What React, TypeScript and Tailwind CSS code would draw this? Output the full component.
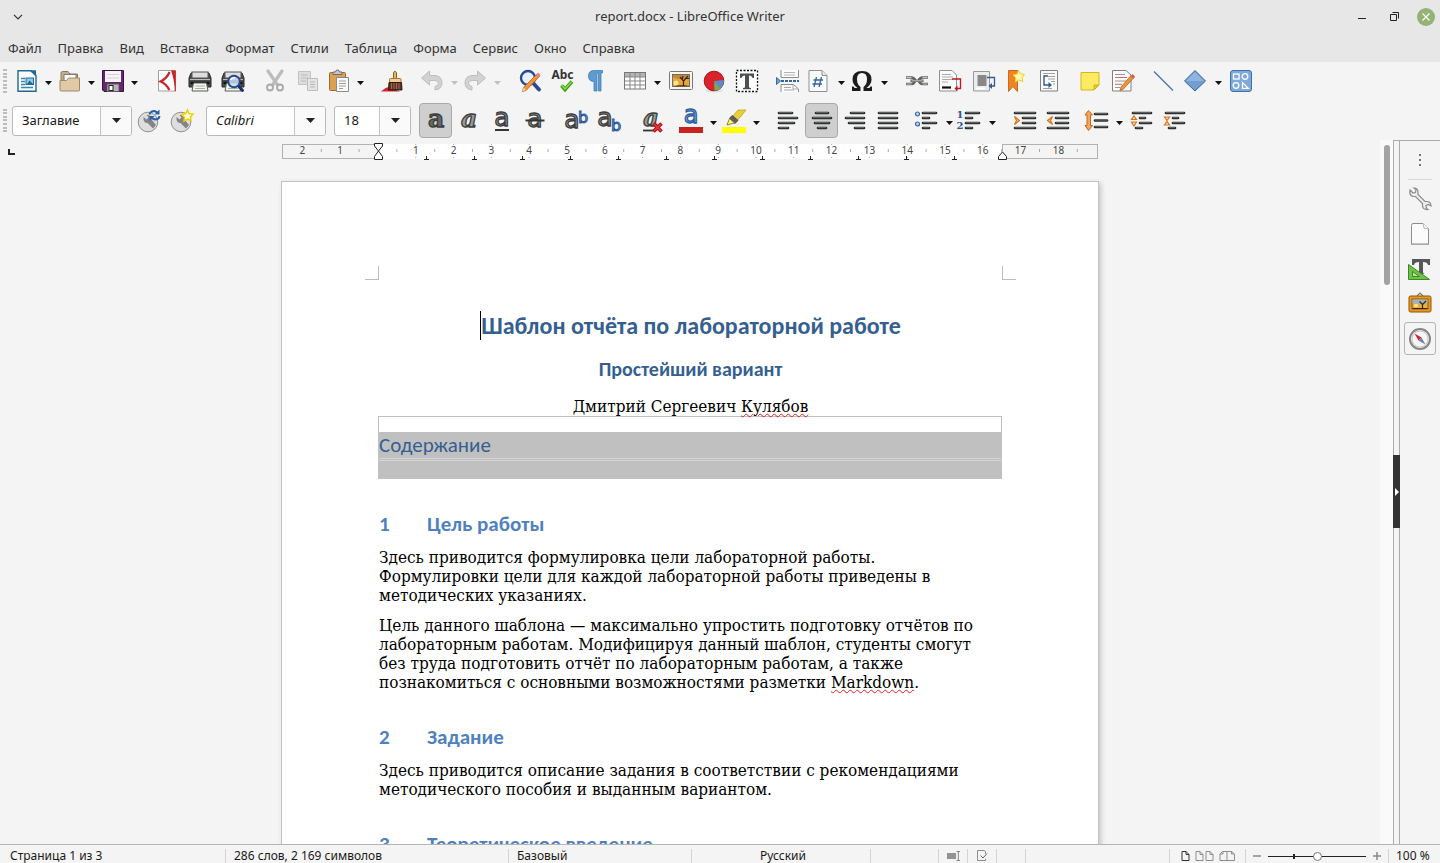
import React from "react";
import type { ReactNode } from "react";

/* ---------- icon helpers ---------- */

function Ic({ children, size = 24 }: { children: ReactNode; size?: number }) {
  return (
    <svg width={size} height={size} viewBox="0 0 24 24" className="block shrink-0 overflow-visible" fill="none" aria-hidden="true">
      {children}
    </svg>
  );
}

function Caret({ dim = false }: { dim?: boolean }) {
  return (
    <svg width="7" height="4" viewBox="0 0 7 4" className="block" aria-hidden="true">
      <path d="M0 0H7L3.5 4Z" fill={dim ? "#c0c0c0" : "#111"} />
    </svg>
  );
}

const NewDoc = () => (
  <Ic>
    <path d="M3 1.8H16L21 6.5V22.2H3Z" fill="#fbfdfe" stroke="#1d6a97" strokeWidth="1.4" />
    <path d="M14.5 1.2H21V7.6Z" fill="#1d6a97" />
    <path d="M6 9.5H10M6 12.5H10M6 15.5H10M6 18.5H18" stroke="#3584b4" strokeWidth="1.5" />
    <rect x="11" y="9" width="7.5" height="6.5" fill="#9bc7e2" stroke="#1d6a97" />
    <path d="M12 15L14.5 11.5L18 15Z" fill="#1d6a97" />
  </Ic>
);
const OpenDoc = () => (
  <Ic>
    <path d="M3 20V4Q3 2.5 4.5 2.5H10L12 5H19.5V20Z" fill="#c5ae88" stroke="#8d7a5b" />
    <path d="M6 5.5H18V13H6Z" fill="#fff" stroke="#777" />
    <path d="M2 21V11.5H8.5L10.5 9H21.5V21Q21.5 22 20.5 22H3Q2 22 2 21Z" fill="#dfc9a6" stroke="#9f8a68" />
  </Ic>
);
const SaveDoc = () => (
  <Ic>
    <path d="M1.5 1.5H22.5V22.5H3L1.5 21Z" fill="#64286e" stroke="#3c1245" />
    <rect x="4" y="2" width="16" height="11" fill="#f7f5f8" />
    <path d="M6 5.5H18M6 9H18" stroke="#d5ccd8" />
    <rect x="6" y="15" width="12" height="7.5" fill="#b5b5b5" stroke="#555" strokeWidth=".8" />
    <rect x="8" y="16.5" width="4" height="5" fill="#fff" stroke="#222" />
  </Ic>
);
const Pdf = () => (
  <Ic>
    <path d="M3.500 1.500H20.500V22H3.500Z" fill="#fff" stroke="#a0a0a0" />
    <path d="M16 1.500H20.800V22.300H19.800Q19.500 11 16 1.500Z" fill="#cf1f28" />
    <path d="M14.500 3Q12 9.500 5.500 12.500Q11.500 15 14.300 21" stroke="#cf1f28" strokeWidth="2.200" />
  </Ic>
);
const printerShape = (
  <>
    <path d="M3 4H21L23 9V18H1V9Z" fill="#4b4d4b" stroke="#292b29" />
    <rect x="4" y="3" width="16" height="6" fill="#dedede" stroke="#555" />
    <path d="M2 10.500H22" stroke="#bbb" />
    <path d="M2.500 14H21.500" stroke="#111" strokeWidth="2.500" />
    <path d="M5.500 14H18.500L20 22H4Z" fill="#f4f5f2" stroke="#596055" />
    <path d="M7.500 17H17M7 19.500H17" stroke="#a6b39d" />
  </>
);
const Print = () => <Ic>{printerShape}</Ic>;
const Preview = () => (
  <Ic>
    {printerShape}
    <path d="M17.500 17L21.500 21.500" stroke="#18306b" strokeWidth="3" strokeLinecap="round" />
    <circle cx="13" cy="12.500" r="5.800" fill="#c9dcf0" fillOpacity=".85" stroke="#23488f" strokeWidth="2" />
    <path d="M9.500 11Q11 8.500 14 9" stroke="#fff" strokeWidth="1.300" />
  </Ic>
);
const Cut = () => (
  <Ic>
    <path d="M5 2L14.500 16M19 2L9.500 16" stroke="#bcbcbc" strokeWidth="3.200" strokeLinecap="round" />
    <circle cx="7" cy="18.500" r="3" stroke="#a9a9a9" strokeWidth="1.800" />
    <circle cx="17" cy="18.500" r="3" stroke="#a9a9a9" strokeWidth="1.800" />
  </Ic>
);
const Copy = () => (
  <Ic>
    <path d="M2.500 2.500H14.500V15.500H2.500Z" fill="#ddd" stroke="#c3c3c3" />
    <path d="M5 6H12M5 9H12M5 12H10" stroke="#bbb" />
    <path d="M11.500 9.500H21.500V21.500H11.500Z" fill="#e4e4e4" stroke="#bdbdbd" />
    <path d="M14 13H19M14 15.500H19M14 18H19" stroke="#b6b6b6" />
  </Ic>
);
const Paste = () => (
  <Ic>
    <rect x="2.500" y="3.500" width="16" height="18" rx="1" fill="#dca054" stroke="#9b6c2d" />
    <path d="M6 5.500V3H8.500Q8.500 1 10.500 1T12.500 3H15V5.500Z" fill="#c6c6c6" stroke="#6d6d6d" />
    <path d="M9.500 8.500H21.500V22.500H9.500Z" fill="#fbfbfb" stroke="#8b8b8b" />
    <path d="M12 12H19M12 14.500H19M12 17H19M12 19.500H16" stroke="#9a9a9a" />
  </Ic>
);
const Brush = () => (
  <Ic>
    <path d="M0 22.500Q6 17 9 18.500L19 22.500Z" fill="#d9222a" />
    <path d="M12.500 10V3.500Q14 1 15.500 3.500V10Z" fill="#eab35b" stroke="#8f6425" />
    <rect x="8.500" y="9.500" width="11.500" height="4" rx="1" fill="#efcf8f" stroke="#a27a36" />
    <path d="M8 13.500H20.500L21 21H7.500Z" fill="#5c3326" stroke="#2f1812" />
    <path d="M10.500 14V20M13 14V20M15.500 14V20M18 14V20" stroke="#a5694f" />
  </Ic>
);
const undoPath = "M0.500 9L8.500 2V6.500H13Q21 6.500 21 14Q21 20 14 21V17.500Q17.500 17 17.500 14Q17.500 11.500 13.500 11.500H8.500V16Z";
const Undo = () => (
  <Ic><path d={undoPath} fill="#d2d2d2" stroke="#bdbdbd" /></Ic>
);
const Redo = () => (
  <Ic><path d={undoPath} fill="#d2d2d2" stroke="#bdbdbd" transform="translate(22 0) scale(-1 1)" /></Ic>
);
const Find = () => (
  <Ic>
    <circle cx="10" cy="9" r="7" fill="#e6effa" stroke="#294b94" strokeWidth="2.400" />
    <path d="M15.500 14.500L21 20.500" stroke="#294b94" strokeWidth="3.800" strokeLinecap="round" />
    <path d="M19 5L21.500 7.500L8 21.500L4.500 22.500L5.500 18.500Z" fill="#f0953a" stroke="#b5601a" strokeWidth=".8" />
    <path d="M18 6L20 3.500L22.500 6L20.700 8.500Z" fill="#d98484" />
    <path d="M4.500 22.500L5.500 18.500L8 21Z" fill="#f1d2a5" />
  </Ic>
);
const Spell = () => (
  <Ic>
    <text x="11.500" y="10" textAnchor="middle" fontSize="12" fontWeight="700" fontFamily="'Noto Sans', sans-serif" fill="#333">Abc</text>
    <path d="M10.500 16.500L14 20.500L21 12.500" stroke="#3f9b19" strokeWidth="3.600" />
    <path d="M10.800 16.500L14 20L20.700 12.800" stroke="#8ae234" strokeWidth="1.500" />
  </Ic>
);
const Pilcrow = () => (
  <Ic>
    <path d="M10 1.500H18.500V4H17V22H14.500V4H13V22H10V12.500Q4.500 12.500 4.500 7T10 1.500Z" fill="#5d9cd3" stroke="#4281b8" strokeWidth=".8" />
  </Ic>
);
const TableIcon = () => (
  <Ic>
    <rect x="0.500" y="3.500" width="21" height="16.500" fill="#fff" stroke="#777" />
    <rect x="1" y="4" width="20" height="4" fill="#b4b4b4" />
    <path d="M1 8H21M1 12H21M1 16H21M6 4V20M11 4V20M16 4V20" stroke="#878787" />
  </Ic>
);
const Tree = () => (
  <>
    <rect x="3.500" y="5.500" width="17" height="12" fill="#e6a43a" />
    <path d="M3.500 5.500H20.500V9Q12 12 3.500 8Z" fill="#c3873d" />
    <circle cx="7" cy="14" r="2.500" fill="#ffe58e" />
    <path d="M3.500 17.500Q12 15.500 20.500 17V17.500Z" fill="#3e2508" />
    <path d="M14.500 17V12L11 8M14.500 12L19 7M17 9.500H20M13 10.500L14 7" stroke="#3b240b" strokeWidth="1.200" />
  </>
);
const ImageIcon = () => (
  <Ic>
    <rect x="0.500" y="2.500" width="23" height="18" rx="1" fill="#f5f5f2" stroke="#787878" />
    <Tree />
    <rect x="3.500" y="5.500" width="17" height="12" stroke="#5d5d55" strokeWidth=".8" />
  </Ic>
);
const Chart = () => (
  <Ic>
    <ellipse cx="12" cy="21.500" rx="9" ry="2" fill="#e0e0e0" />
    <circle cx="12" cy="12" r="9.800" fill="#d9222a" stroke="#a81118" />
    <path d="M12 12L21.800 11Q22 17 18 20Z" fill="#5b8bc9" />
    <path d="M12 12L18.500 19.500Q16 22 12.500 21.800Z" fill="#7ba558" />
  </Ic>
);
const TextBox = () => (
  <Ic>
    <rect x="1.500" y="1.500" width="21" height="21" fill="#fff" stroke="#111" strokeWidth="1.300" strokeDasharray="2 1.500" />
    <path d="M5 4.500H19V9H17.500Q17 6.500 14 6.500V18Q14 19 16 19V20.200H8V19Q10 19 10 18V6.500Q7 6.500 6.500 9H5Z" fill="#4d5051" />
  </Ic>
);
const PageBreak = () => (
  <Ic>
    <path d="M4 1V8.500H21.500V1" fill="#fcfcfc" stroke="#8c8c8c" />
    <path d="M7 3.500H18M7 6H18" stroke="#b4b4b4" />
    <path d="M-0.500 8.500L3.500 12L-0.500 15.500Z" fill="#6f9fd0" stroke="#3a6b9f" />
    <path d="M4 12H22" stroke="#336699" strokeWidth="1.800" strokeDasharray="3 1" />
    <path d="M4 23V15.500H16.500L21.500 20V23" fill="#fcfcfc" stroke="#8c8c8c" />
    <path d="M7 18.500H14M7 21H17M16 15.500V20H21" stroke="#a8a8a8" />
  </Ic>
);
const Field = () => (
  <Ic>
    <path d="M1 1.500H14L19 6.500V22.500H1Z" fill="#fafafa" stroke="#8f8f8f" />
    <path d="M14 1.500V6.500H19" fill="#e7e7e7" stroke="#8f8f8f" />
    <path d="M6 18L8.500 8M11 18L13.500 8M5.500 11H15M4.500 15H14" stroke="#3465a4" strokeWidth="1.300" />
  </Ic>
);
const Omega = () => (
  <Ic>
    <path d="M1 22V17.500H2.500Q3 19 4.500 19H6.500Q1.500 15.500 1.500 10.500Q1.500 2 11 2T20.500 10.500Q20.500 15.500 15.500 19H17.500Q19 19 19.500 17.500H21V22H12.500V18Q16 15.500 16 10Q16 4 11 4T6 10Q6 15.500 9.500 18V22Z" fill="#1c1c1c" />
  </Ic>
);
const LinkIcon = () => (
  <Ic>
    <path d="M1 8.500H6.500Q9 8.500 10.500 11.500Q9 15 6.500 15H1M23 8.500H17.500Q15 8.500 13.500 11.500Q15 15 17.500 15H23M5.500 11.800H18.500" stroke="#62645f" strokeWidth="2.600" />
    <path d="M1.500 8.500H6.500M1.500 15H6.500M17.500 8.500H22.500M17.500 15H22.500M6.500 11.800H17.500" stroke="#d3d3cf" strokeWidth=".9" />
  </Ic>
);
const Footnote = () => (
  <Ic>
    <path d="M1.500 1.500H14L18.500 6V22H1.500Z" fill="#fbfbfb" stroke="#909090" />
    <path d="M4 5.500H13M4 8H15M4 10.500H15M4 13H10" stroke="#aaa" />
    <path d="M4 18.500H13" stroke="#111" strokeWidth="2.200" />
    <path d="M14 10H22.500V19.500H18" stroke="#c4161c" strokeWidth="1.300" />
    <path d="M19.500 16.500L16.500 19.500L19.500 22.500Z" fill="#c4161c" />
  </Ic>
);
const Endnote = () => (
  <Ic>
    <path d="M2.500 2.500H18.500V22H2.500Z" fill="#ececec" stroke="#999" />
    <rect x="6.500" y="6" width="9" height="11" fill="#888" />
    <path d="M5 19.500H14" stroke="#fff" strokeWidth="2" />
    <path d="M16 8.500H23.500V17H19" stroke="#315d94" strokeWidth="1.300" />
    <path d="M21 14L17.500 17L21 20Z" fill="#315d94" />
  </Ic>
);
const Bookmark = () => (
  <Ic>
    <path d="M4.500 1.500H13.500V22.500L9 17.500L4.500 22.500Z" fill="#ef8425" stroke="#cf6815" />
    <path d="M14.500 1.500L16.500 5L20.500 5.500L18 8.500L19 12.500L15 11L11.500 13V8.800L9 6L13 5Z" fill="#fff6a8" stroke="#efcf2a" />
  </Ic>
);
const CrossRef = () => (
  <Ic>
    <path d="M3.500 1.500H20.500V22H3.500Z" fill="#fafafa" stroke="#808080" />
    <path d="M6 4.500H18M11 7.500H18M11 10H18M14 12.500H18M16 15H18M6 19.500H15" stroke="#a0a0a0" />
    <path d="M11 7H7V16H12" stroke="#2d5c97" strokeWidth="1.400" />
    <path d="M11.500 13L15 16L11.500 19Z" fill="#2d5c97" />
  </Ic>
);
const Note = () => (
  <Ic>
    <path d="M2 3.500H20V16L15 21H2Z" fill="#fcea62" stroke="#d6b818" />
    <path d="M20 16H15V21Z" fill="#e7c91f" stroke="#c9aa12" strokeWidth=".8" />
  </Ic>
);
const TrackChanges = () => (
  <Ic>
    <path d="M0.500 1.500H14L19 6V22H0.500Z" fill="#fbfbfb" stroke="#808080" />
    <path d="M3 5.500H13M3 12H14M3 18.500H8" stroke="#999" />
    <path d="M3 8.500H15M3 15.300H10" stroke="#d26767" />
    <path d="M19.500 6L22 8.500L11 20.500L8 21.500L9 18Z" fill="#f0953a" stroke="#b5601a" strokeWidth=".8" />
    <path d="M18.500 7.500L20.500 5L23 7.500L21.300 9.700Z" fill="#d65b5b" />
  </Ic>
);
const LineIcon = () => <Ic><path d="M0 2.500L19 21.500" stroke="#3f73ad" strokeWidth="1.200" /></Ic>;
const Diamond = () => (
  <Ic>
    <path d="M10 1.500L20.500 12L10 22L-0.500 12Z" fill="#729fcf" stroke="#3465a4" />
    <path d="M10 3L19 12H1Z" fill="#8fb4de" />
  </Ic>
);
const Shapes = () => (
  <Ic>
    <rect x="0.500" y="1.500" width="21" height="21" rx="2.500" fill="#7ea9d8" stroke="#3f70ad" />
    <rect x="3.500" y="5" width="5.500" height="5" stroke="#fff" strokeWidth="1.300" />
    <circle cx="15" cy="7.500" r="2.800" stroke="#fff" strokeWidth="1.300" />
    <circle cx="6" cy="16.500" r="2.800" stroke="#fff" strokeWidth="1.300" />
    <path d="M12.500 13.500V19.300H18.300Z" stroke="#fff" strokeWidth="1.300" />
  </Ic>
);

/* ---------- formatting toolbar ---------- */

function StyleBase({ children }: { children: ReactNode }) {
  return (
    <Ic>
      <circle cx="11" cy="13" r="9.800" fill="#dedede" stroke="#8f8f8f" />
      <path d="M6.500 8L9.500 10.500L11.500 8.500L9.500 6Q14.500 5.500 14.500 10.500L19 16L16 19.500L10.500 14Q6 14 6.500 8Z" fill="#848484" />
      {children}
    </Ic>
  );
}
const UpdateStyle = () => (
  <StyleBase>
    <path d="M12.500 5.500Q13.500 2 17.500 2L20.500 3.500M22.500 7Q22 10.500 18 10.500L14.500 9" stroke="#2a5fa8" strokeWidth="2" />
    <path d="M22.500 0.500V5.500H17.500ZM12.500 12V7H17.500Z" fill="#2a5fa8" />
  </StyleBase>
);
const NewStyle = () => (
  <StyleBase>
    <path d="M17.500 1L19 4.500L23 5L20.500 8L21 11.500L17.500 10L14 12L14.500 8L11.500 5.500L15.800 4.500Z" fill="#fffbe0" stroke="#edd400" strokeWidth="1.500" />
  </StyleBase>
);

const slab = "'DejaVu Serif', 'Liberation Serif', serif";
const sans = "'DejaVu Sans', 'Noto Sans', sans-serif";

function Glyph({ x = 12, y = 18, size = 23, bold = false, italic = false, fill = "#999c97", stroke = "#3b3e3d" }: {
  x?: number; y?: number; size?: number; bold?: boolean; italic?: boolean; fill?: string; stroke?: string;
}) {
  return (
    <text x={x} y={y} textAnchor="middle" fontSize={size} fontWeight={bold ? 700 : 400} fontStyle={italic ? "italic" : "normal"}
      fontFamily={bold ? slab : sans} fill={fill} stroke={stroke} strokeWidth="1.300">
      a
    </text>
  );
}
const Bold = () => <Ic><Glyph bold y={18} size={25} fill="#666968" /></Ic>;
const Italic = () => <Ic><Glyph italic bold y={18} size={25} /></Ic>;
const Underline = () => (
  <Ic><Glyph y={17} size={25} /><path d="M5 21H19" stroke="#333635" strokeWidth="2" /></Ic>
);
const Strike = () => (
  <Ic><Glyph y={18} size={25} /><path d="M2.500 11.500H21.500" stroke="#333635" strokeWidth="2" /></Ic>
);
const Super = () => (
  <Ic>
    <Glyph x={7} y={19} size={25} />
    <text x="18" y="13.500" textAnchor="middle" fontSize="16" fontWeight="400" fontFamily={sans} fill="#8db3e2" stroke="#2a5699">b</text>
  </Ic>
);
const Sub = () => (
  <Ic>
    <Glyph x={7} y={17} size={25} />
    <text x="18" y="22" textAnchor="middle" fontSize="16" fontWeight="400" fontFamily={sans} fill="#8db3e2" stroke="#2a5699">b</text>
  </Ic>
);
const ClearFormat = () => (
  <Ic>
    <Glyph x={11} y={17} size={24} italic bold />
    <path d="M3 21.500H14" stroke="#333635" strokeWidth="1.800" />
    <path d="M13.500 14.500L21.500 22.500M21.500 14.500L13.500 22.500" stroke="#b00d12" strokeWidth="3.600" />
    <path d="M14 15L21 22M21 15L14 22" stroke="#ee3d3d" strokeWidth="1.400" />
  </Ic>
);
const FontColor = () => (
  <Ic>
    <Glyph x={11} y={14} size={24} fill="#83ade0" stroke="#2f5f9f" />
    <rect x="-1" y="18" width="24" height="6" fill="#c9211e" />
  </Ic>
);
const Highlight = () => (
  <Ic>
    <path d="M15 1H23L14 12L9.500 7.500Z" fill="#e8cf36" stroke="#b59a16" strokeWidth=".7" />
    <path d="M9.500 6.500L15 11.500L12 14.500L6.500 9Z" fill="#5d6062" stroke="#333" strokeWidth=".7" />
    <path d="M6.500 9.500L11.500 14L4 16Z" fill="#fff27a" stroke="#7a6a10" strokeWidth=".8" />
    <rect x="-1" y="18" width="24" height="6" fill="#ffff00" />
  </Ic>
);

function Bars({ rows }: { rows: Array<[number, number, number]> }) {
  return (
    <g>
      {rows.map(([x1, x2, y]) => (
        <g key={`${x1}-${y}`}>
          <path d={`M${x1} ${y}H${x2}`} stroke="#2b2e2c" strokeWidth="2.600" strokeLinecap="round" />
          <path d={`M${x1} ${y - 0.4}H${x2}`} stroke="#7a7d7a" strokeWidth=".7" />
        </g>
      ))}
    </g>
  );
}
const AlignLeft = () => <Ic><Bars rows={[[2, 15, 4], [2, 20, 9], [2, 17, 14], [2, 11, 19]]} /></Ic>;
const AlignCenter = () => <Ic><Bars rows={[[6, 18, 4], [3, 21, 9], [5, 19, 14], [8, 16, 19]]} /></Ic>;
const AlignRight = () => <Ic><Bars rows={[[8, 21, 4], [3, 21, 9], [6, 21, 14], [12, 21, 19]]} /></Ic>;
const Justify = () => <Ic><Bars rows={[[3, 21, 4], [3, 21, 9], [3, 21, 14], [3, 21, 19]]} /></Ic>;
const Bullets = () => (
  <Ic>
    <Bars rows={[[7, 20, 4], [7, 13, 9], [7, 20, 14], [7, 13, 19]]} />
    <circle cx="1.500" cy="5" r="2" fill="#c4dbf4" stroke="#3465a4" strokeWidth="1.200" />
    <circle cx="1.500" cy="15" r="2" fill="#c4dbf4" stroke="#3465a4" strokeWidth="1.200" />
  </Ic>
);
const Numbering = () => (
  <Ic>
    <Bars rows={[[7, 20, 4], [7, 13, 9], [7, 20, 14], [7, 13, 19]]} />
    <text x="1" y="9" textAnchor="middle" fontSize="10" fontWeight="700" fontFamily={slab} fill="#2c5796">1</text>
    <text x="1" y="20" textAnchor="middle" fontSize="10" fontWeight="700" fontFamily={slab} fill="#2c5796">2</text>
  </Ic>
);
const Indent = () => (
  <Ic>
    <Bars rows={[[2, 22, 4], [10, 22, 9], [10, 22, 14], [2, 22, 19]]} />
    <path d="M1.500 7.500L6.500 11.500L1.500 15.500L3.500 11.500Z" fill="#f5c193" stroke="#d9731c" strokeWidth="1.200" />
  </Ic>
);
const Outdent = () => (
  <Ic>
    <Bars rows={[[2, 22, 4], [10, 22, 9], [10, 22, 14], [2, 22, 19]]} />
    <path d="M6.500 7.500L1.500 11.500L6.500 15.500L4.500 11.500Z" fill="#f5c193" stroke="#d9731c" strokeWidth="1.200" />
  </Ic>
);
const LineSpacing = () => (
  <Ic>
    <Bars rows={[[9, 21, 5], [9, 21, 11.5], [9, 21, 18]]} />
    <path d="M2.500 1.500L6.500 6H4.500V16.500H6.500L2.500 21.500L-1 16.500H1V6H-1Z" fill="#f3a65f" stroke="#c9691b" />
  </Ic>
);
const ParaMore = () => (
  <Ic>
    <Bars rows={[[2, 20, 4], [9, 14, 9], [9, 20, 14], [5, 11, 19]]} />
    <path d="M3 7L5.500 10.500H0.500ZM3 17L5.500 13H0.500Z" fill="#fbe0c7" stroke="#d9731c" strokeWidth="1.200" />
  </Ic>
);
const ParaLess = () => (
  <Ic>
    <Bars rows={[[2, 20, 4], [9, 14, 9], [9, 20, 14], [5, 11, 19]]} />
    <path d="M3 11.500L5.500 8H0.500ZM3 12.500L5.500 16H0.500Z" fill="#fbe0c7" stroke="#d9731c" strokeWidth="1.200" />
  </Ic>
);

/* ---------- toolbar parts ---------- */

function Tool({ label, active = false, children }: { label: string; active?: boolean; children: ReactNode }) {
  return (
    <button
      type="button"
      aria-label={label}
      className={
        active
          ? "flex h-[35px] w-[33px] shrink-0 items-center justify-center rounded-sm border border-[#a9a9a9] bg-[#cfcfcf]"
          : "flex h-[35px] w-[33px] shrink-0 items-center justify-center"
      }
    >
      {children}
    </button>
  );
}

function Split({ label, dim = false, children }: { label: string; dim?: boolean; children: ReactNode }) {
  return (
    <div className="flex shrink-0">
      <button type="button" aria-label={label} className="flex h-[35px] w-[30px] items-center justify-center">
        {children}
      </button>
      <button type="button" aria-label={`${label}: варианты`} className="flex h-[35px] w-[13px] items-center justify-center pt-1">
        <Caret dim={dim} />
      </button>
    </div>
  );
}

const Gap = () => <div className="w-[9px] shrink-0" />;

const Grip = () => (
  <div className="mr-[5px] ml-[3px] flex h-6 w-1 shrink-0 flex-col justify-between">
    {[0, 1, 2, 3, 4, 5, 6].map((n) => (
      <span key={n} className="h-0.5 w-1 bg-[#bcbcbc]" />
    ))}
  </div>
);

function Combo({ label, value, frame, text }: { label: string; value: string; frame: string; text: string }) {
  return (
    <div className={`grid h-[30px] shrink-0 overflow-hidden rounded-[3px] border border-[#b9b9b9] bg-white ${frame}`}>
      <select aria-label={label} defaultValue={value} className={`col-start-1 row-start-1 w-full appearance-none bg-transparent pl-[9px] text-[13px] text-[#1a1a1a] outline-none ${text}`}>
        <option>{value}</option>
      </select>
      <span className="pointer-events-none col-start-1 row-start-1 flex w-[31px] items-center justify-center justify-self-end border-l border-[#c4c4c4] bg-[#fafafa]">
        <svg width="9" height="5" viewBox="0 0 9 5" aria-hidden="true"><path d="M0 0H9L4.500 5Z" fill="#222" /></svg>
      </span>
    </div>
  );
}

/* ---------- ruler ---------- */

function Ruler() {
  const cm = 37.8;
  const zero = 96;
  const end = 720;
  const marks = Array.from({ length: 21 }, (_, i) => i - 2);
  const tabs = Array.from({ length: 12 }, (_, i) => zero + 48 * (i + 1));
  return (
    <svg width="816" height="22" viewBox="0 0 816 22" className="block shrink-0" aria-hidden="true">
      <rect x="0.500" y="4.500" width="815" height="14" fill="#f4f4f4" stroke="#b2b2b2" />
      <rect x={zero} y="4" width={end - zero} height="15" fill="#fff" />
      {marks.filter((m) => m !== 0 && m <= 18).map((m) => (
        <g key={m}>
          <text x={zero + m * cm} y="14" textAnchor="middle" fontSize="10" fontFamily="'Noto Sans', sans-serif" fill="#454545">
            {Math.abs(m)}
          </text>
          {m > 0 && m < 17 && <path d={`M${zero + m * cm} 4V5M${zero + m * cm} 17V18`} stroke="#aaa" />}
        </g>
      ))}
      {marks.map((m) => (
        <path key={m} d={`M${zero + (m + 0.5) * cm} 9V12`} stroke="#aaa" />
      ))}
      {tabs.map((x) => (
        <path key={x} d={`M${x + 0.5} 16V19M${x - 2} 19.500H${x + 3}`} stroke="#222" />
      ))}
      <path d="M92.500 3.500H100.500V6L96.500 11L92.500 6ZM92.500 19.500H100.500V16.500L96.500 11L92.500 16.500Z" fill="#fff" stroke="#222" />
      <path d="M716.500 19.500H724.500V16.500L720.500 12L716.500 16.500Z" fill="#fff" stroke="#222" />
      <path d="M720.500 4V12" stroke="#b2b2b2" />
    </svg>
  );
}

/* ---------- document ---------- */

function Heading({ n, children }: { n: number; children: ReactNode }) {
  return (
    <h2 className="mt-[33px] mb-3 flex text-[21px] leading-6 font-bold text-[#4f81bd]">
      <span className="w-12">{n}</span>
      {children}
    </h2>
  );
}

function Para({ children }: { children: ReactNode }) {
  return <p className="mb-[11px] font-['DejaVu_Serif_Condensed','DejaVu_Serif',serif] text-[17px] leading-[19px] whitespace-nowrap text-black">{children}</p>;
}

const Misspelt = ({ children }: { children: ReactNode }) => (
  <span className="underline decoration-[#e02020] decoration-wavy decoration-1 underline-offset-1">{children}</span>
);

function DocumentPage() {
  return (
    <article className="mt-[19px] w-[818px] shrink-0 border border-[#c3c3c3] bg-white font-[Carlito,Lato,sans-serif] shadow-[2px_2px_5px_rgba(0,0,0,0.2)]">
      <div className="flex justify-between pt-[84px] pr-[82px] pl-[83px]">
        <span className="h-3.5 w-3.5 border-r border-b border-[#bdbdbd]" />
        <span className="h-3.5 w-3.5 border-b border-l border-[#bdbdbd]" />
      </div>
      <div className="mr-24 ml-[97px] pb-24">
        <h1 className="mt-[31px] flex justify-center text-[24px] leading-[30px] font-bold whitespace-nowrap text-[#365f91]">
          <span className="h-[29px] w-px bg-black" />
          Шаблон отчёта по лабораторной работе
        </h1>
        <p className="mt-4 text-center text-[20px] leading-6 font-bold text-[#365f91]">Простейший вариант</p>
        <p className="mt-4 text-center font-['DejaVu_Serif_Condensed','DejaVu_Serif',serif] text-[17px] leading-[19px] text-black">
          Дмитрий Сергеевич <Misspelt>Кулябов</Misspelt>
        </p>
        <section className="-ml-px border-x border-t border-[#c0c0c0]">
          <div className="h-[15px]" />
          <div className="h-[47px] bg-[#c0c0c0]">
            <h3 className="h-[26px] text-[21px] leading-[26px] text-[#365f91]">Содержание</h3>
            <div className="h-[3px] border-y border-[#d4d4d4]" />
          </div>
        </section>
        <Heading n={1}>Цель работы</Heading>
        <Para>
          Здесь приводится формулировка цели лабораторной работы.<br />
          Формулировки цели для каждой лабораторной работы приведены в<br />
          методических указаниях.
        </Para>
        <Para>
          Цель данного шаблона — максимально упростить подготовку отчётов по<br />
          лабораторным работам. Модифицируя данный шаблон, студенты смогут<br />
          без труда подготовить отчёт по лабораторным работам, а также<br />
          познакомиться с основными возможностями разметки <Misspelt>Markdown</Misspelt>.
        </Para>
        <Heading n={2}>Задание</Heading>
        <Para>
          Здесь приводится описание задания в соответствии с рекомендациями<br />
          методического пособия и выданным вариантом.
        </Para>
        <Heading n={3}>Теоретическое введение</Heading>
      </div>
    </article>
  );
}

/* ---------- sidebar ---------- */

function SideButton({ label, active = false, children }: { label: string; active?: boolean; children: ReactNode }) {
  return (
    <button
      type="button"
      aria-label={label}
      className={
        active
          ? "my-px flex h-[33px] w-8 items-center justify-center rounded-[3px] border border-[#b5b5b5]"
          : "my-px flex h-[33px] w-8 items-center justify-center"
      }
    >
      {children}
    </button>
  );
}

function Sidebar() {
  return (
    <aside className="flex shrink-0 border-t border-[#ababab]">
      <div className="flex w-[7px] flex-col items-stretch border-x border-[#ababab]">
        <button type="button" aria-label="Скрыть боковую панель" className="-mx-px mt-[314px] flex h-[73px] items-center justify-center bg-[#333]">
          <svg width="4" height="8" viewBox="0 0 4 8" aria-hidden="true"><path d="M0 0L4 4L0 8Z" fill="#fff" /></svg>
        </button>
      </div>
      <div className="flex w-10 flex-col items-center">
        <button type="button" aria-label="Настройки боковой панели" className="flex h-[38px] w-8 items-center justify-center">
          <svg width="4" height="14" viewBox="0 0 4 14" aria-hidden="true">
            <path d="M1 1H3V3H1ZM1 6H3V8H1ZM1 11H3V13H1Z" fill="#777" />
          </svg>
        </button>
        <div className="mb-px h-px w-6 bg-[#d9d9d9]" />
        <SideButton label="Свойства">
          <Ic>
            <path d="M2 3L5 6L7.500 5.500L8 2.500L6 1Q10 1 10 5V7.500L17 14.500H19.500Q23 15 23 19L20.500 17.500L18 18.500L18.500 21.500L20 22.500Q15 23 14.500 19V16.500L7.500 9.500H5Q1 8.500 2 3Z" fill="#eee" stroke="#8b8b8b" strokeWidth="1.200" />
          </Ic>
        </SideButton>
        <SideButton label="Страница">
          <Ic>
            <path d="M3.500 3.500Q3.500 1.500 5 1.500H15L20.500 7V22H3.500Z" fill="#fbfbfb" stroke="#8e8e8e" />
            <path d="M15 1.500L16 6L20.500 7" fill="#fff" stroke="#b4b4b4" />
            <path d="M3 22.500H21" stroke="#aaa" />
          </Ic>
        </SideButton>
        <SideButton label="Стили">
          <Ic>
            <path d="M4 2H22V8H20Q19.500 5 15 5V15Q15 17 17 17H9Q11 17 11 15V5Q6.500 5 6 8H4Z" fill="#555859" />
            <path d="M0.500 7.500L21.500 22.500H0.500Z" fill="#6fc24a" stroke="#3b8a1f" />
            <path d="M4.500 14.500L11.500 19.500H4.500Z" fill="#b9e6a2" stroke="#3b8a1f" />
          </Ic>
        </SideButton>
        <SideButton label="Галерея">
          <Ic>
            <path d="M9 4L12 1L15 4" stroke="#777" strokeWidth="1.200" />
            <rect x="1" y="4" width="22" height="16" rx="1.500" fill="#e79b25" stroke="#8c5507" />
            <rect x="4" y="7" width="16" height="10" fill="#e6b04a" stroke="#8c5507" />
            <path d="M4.500 7.500H19.500V11Q12 13 4.500 11.500Z" fill="#9fb2bd" />
            <circle cx="8" cy="13.500" r="1.800" fill="#ffe58e" />
            <path d="M14.500 16.500V12.500L11.500 9.500M14.500 12.500L18 9M4.500 16.500H19.500" stroke="#3b240b" strokeWidth="1.200" />
          </Ic>
        </SideButton>
        <SideButton label="Навигатор" active>
          <Ic>
            <circle cx="12" cy="12" r="10" fill="#f6f6f6" stroke="#858585" strokeWidth="2" />
            <circle cx="12" cy="12" r="8" stroke="#c5c5c5" />
            <path d="M6.500 6.500L13.500 10.500L10.500 13.500Z" fill="#d9232c" />
            <path d="M17.500 17.500L10.500 13.500L13.500 10.500Z" fill="#6a83ad" />
          </Ic>
        </SideButton>
      </div>
    </aside>
  );
}

/* ---------- status bar ---------- */

function MiniPage({ dark = false }: { dark?: boolean }) {
  return (
    <svg width="9" height="10" viewBox="0 0 9 10" className="block" aria-hidden="true">
      <path d="M1 0.500H5L8 3.500V9.500H1ZM5 0.500V3.500H8" fill="none" stroke={dark ? "#333" : "#8d8d8d"} />
    </svg>
  );
}

function StatusBar() {
  const cell = "flex h-[15px] shrink-0 items-center border-l border-[#d4d4d4]";
  return (
    <footer className="flex h-[19px] shrink-0 items-center border-t border-[#b5b5b5] bg-[#f4f4f4] pt-1 text-[12px] whitespace-nowrap text-[#1a1a1a]">
      <div className="flex w-[225px] shrink-0 items-center pl-2.5">Страница 1 из 3</div>
      <div className={`${cell} w-[283px] pl-2`}>286 слов, 2 169 символов</div>
      <div className={`${cell} w-[183px] pl-2`}>Базовый</div>
      <div className={`${cell} w-[179px] justify-center pl-1`}>Русский</div>
      <div className={`${cell} min-w-0 flex-1`} />
      <button type="button" aria-label="Режим вставки" className={`${cell} w-[29px] justify-center`}>
        <svg width="13" height="10" viewBox="0 0 13 10" aria-hidden="true">
          <path d="M0 2H9V8H0Z" fill="#939393" /><path d="M9.500 0.500H13M9.500 9.500H13M11.300 0V10" stroke="#888" />
        </svg>
      </button>
      <button type="button" aria-label="Документ изменён" className={`${cell} w-[29px] justify-center`}>
        <svg width="12" height="12" viewBox="0 0 12 12" fill="none" aria-hidden="true">
          <path d="M9.500 4V1.500L8 0.500H1.500V10.500H9.500V9" stroke="#8d8d8d" /><path d="M4.500 5.500L7 8L11 3.500" stroke="#666" />
        </svg>
      </button>
      <div className={`${cell} w-[29px]`} />
      <div className={`${cell} w-[144px]`} />
      <div className={`${cell} w-[76px] justify-center gap-[5px]`}>
        <button type="button" aria-label="Одна страница"><MiniPage dark /></button>
        <button type="button" aria-label="Несколько страниц" className="flex gap-px"><MiniPage /><MiniPage /></button>
        <button type="button" aria-label="Режим книги">
          <svg width="16" height="10" viewBox="0 0 16 10" className="block" aria-hidden="true">
            <path d="M8 9.500H1V3L3.500 0.500H12.500L15.500 3V9.500H8V0.500M4 0.500V3H1M12.500 0.500V3H15" fill="none" stroke="#8d8d8d" />
          </svg>
        </button>
      </div>
      <div className={`${cell} w-[143px] justify-center gap-[7px]`}>
        <button type="button" aria-label="Уменьшить масштаб">
          <svg width="8" height="8" viewBox="0 0 8 8" className="block" aria-hidden="true"><path d="M0 4H8" stroke="#888" strokeWidth="1.500" /></svg>
        </button>
        <span className="relative flex w-[98px] items-center">
          <span className="absolute left-[25px] h-[5px] w-0.5 bg-[#222]" />
          <input
            type="range"
            aria-label="Масштаб"
            defaultValue={50}
            className="relative h-2 w-full appearance-none bg-transparent [&::-webkit-slider-runnable-track]:h-px [&::-webkit-slider-runnable-track]:bg-[#222] [&::-webkit-slider-thumb]:-mt-1 [&::-webkit-slider-thumb]:h-[9px] [&::-webkit-slider-thumb]:w-[9px] [&::-webkit-slider-thumb]:appearance-none [&::-webkit-slider-thumb]:rounded-full [&::-webkit-slider-thumb]:border [&::-webkit-slider-thumb]:border-[#777] [&::-webkit-slider-thumb]:bg-white"
          />
        </span>
        <button type="button" aria-label="Увеличить масштаб">
          <svg width="8" height="8" viewBox="0 0 8 8" className="block" aria-hidden="true"><path d="M0 4H8M4 0V8" stroke="#888" strokeWidth="1.500" /></svg>
        </button>
      </div>
      <div className={`${cell} w-[52px] pl-[7px]`}>100 %</div>
    </footer>
  );
}

/* ---------- window ---------- */

const menus = ["Файл", "Правка", "Вид", "Вставка", "Формат", "Стили", "Таблица", "Форма", "Сервис", "Окно", "Справка"];

export default function App() {
  return (
    <div className="flex h-screen flex-col overflow-hidden bg-[#f4f4f4] font-['Noto_Sans','Open_Sans',sans-serif] text-[13px] text-[#333]">
      <header className="bg-[#e7e7e7]">
        <div className="flex h-[33px] items-center">
          <button type="button" aria-label="Меню окна" className="flex w-[34px] justify-end pr-[11px]">
            <svg width="10" height="6" viewBox="0 0 10 6" fill="none" aria-hidden="true"><path d="M1 0.800L5 4.800L9 0.800" stroke="#333" strokeWidth="1.200" /></svg>
          </button>
          <h1 className="flex-1 text-center">report.docx - LibreOffice Writer</h1>
          <div className="flex w-[94px] items-center">
            <button type="button" aria-label="Свернуть" className="flex h-4 w-8 items-center justify-center pt-1">
              <span className="h-px w-2 bg-[#222]" />
            </button>
            <button type="button" aria-label="Восстановить" className="flex w-8 justify-center">
              <svg width="9" height="9" viewBox="0 0 9 9" fill="none" className="block" aria-hidden="true">
                <path d="M0.500 2.500H6.500V8.500H0.500ZM2.500 0.500H8.500V6.500" stroke="#222" />
              </svg>
            </button>
            <button type="button" aria-label="Закрыть" className="ml-[7px] flex h-[18px] w-[18px] items-center justify-center rounded-full bg-[#92b372]">
              <svg width="8" height="8" viewBox="0 0 8 8" aria-hidden="true"><path d="M0.500 0.500L7.500 7.500M7.500 0.500L0.500 7.500" stroke="#fff" strokeWidth="1.200" /></svg>
            </button>
          </div>
        </div>
        <nav className="flex h-[29px] items-center pt-0.5">
          {menus.map((m) => (
            <button key={m} type="button" className="px-2">{m}</button>
          ))}
        </nav>
      </header>

      <div role="toolbar" aria-label="Стандартная" className="flex h-[38px] shrink-0 items-center">
        <Grip />
        <Split label="Создать"><NewDoc /></Split>
        <Split label="Открыть"><OpenDoc /></Split>
        <Split label="Сохранить"><SaveDoc /></Split>
        <Gap />
        <Tool label="Экспорт в PDF"><Pdf /></Tool>
        <Tool label="Печать"><Print /></Tool>
        <Tool label="Просмотр печати"><Preview /></Tool>
        <Gap />
        <Tool label="Вырезать"><Cut /></Tool>
        <Tool label="Копировать"><Copy /></Tool>
        <Split label="Вставить"><Paste /></Split>
        <Gap />
        <Tool label="Копировать форматирование"><Brush /></Tool>
        <Gap />
        <Split label="Отменить" dim><Undo /></Split>
        <Split label="Вернуть" dim><Redo /></Split>
        <Gap />
        <Tool label="Найти и заменить"><Find /></Tool>
        <Tool label="Орфография"><Spell /></Tool>
        <Tool label="Непечатаемые символы"><Pilcrow /></Tool>
        <Gap />
        <Split label="Таблица"><TableIcon /></Split>
        <Tool label="Изображение"><ImageIcon /></Tool>
        <Tool label="Диаграмма"><Chart /></Tool>
        <Tool label="Текстовое поле"><TextBox /></Tool>
        <Gap />
        <Tool label="Разрыв страницы"><PageBreak /></Tool>
        <Split label="Поле"><Field /></Split>
        <Split label="Специальный символ"><Omega /></Split>
        <Gap />
        <Tool label="Гиперссылка"><LinkIcon /></Tool>
        <Tool label="Сноска"><Footnote /></Tool>
        <Tool label="Концевая сноска"><Endnote /></Tool>
        <Tool label="Закладка"><Bookmark /></Tool>
        <Tool label="Перекрёстная ссылка"><CrossRef /></Tool>
        <Gap />
        <Tool label="Комментарий"><Note /></Tool>
        <Tool label="Запись изменений"><TrackChanges /></Tool>
        <Gap />
        <Tool label="Линия"><LineIcon /></Tool>
        <Split label="Фигуры"><Diamond /></Split>
        <Tool label="Функции рисования"><Shapes /></Tool>
      </div>

      <div role="toolbar" aria-label="Форматирование" className="flex h-10 shrink-0 items-center pt-px">
        <Grip />
        <Combo label="Стиль абзаца" value="Заглавие" frame="w-[120px]" text="" />
        <Tool label="Обновить стиль"><UpdateStyle /></Tool>
        <Tool label="Создать стиль"><NewStyle /></Tool>
        <Combo label="Шрифт" value="Calibri" frame="ml-2 w-[120px]" text="italic" />
        <Combo label="Размер шрифта" value="18" frame="mx-2 w-[77px]" text="" />
        <Tool label="Полужирный" active><Bold /></Tool>
        <Tool label="Курсив"><Italic /></Tool>
        <Tool label="Подчёркнутый"><Underline /></Tool>
        <Tool label="Зачёркнутый"><Strike /></Tool>
        <Gap />
        <Tool label="Верхний индекс"><Super /></Tool>
        <Tool label="Нижний индекс"><Sub /></Tool>
        <Gap />
        <Tool label="Очистить форматирование"><ClearFormat /></Tool>
        <Gap />
        <Split label="Цвет шрифта"><FontColor /></Split>
        <Split label="Цвет выделения"><Highlight /></Split>
        <Gap />
        <Tool label="По левому краю"><AlignLeft /></Tool>
        <Tool label="По центру" active><AlignCenter /></Tool>
        <Tool label="По правому краю"><AlignRight /></Tool>
        <Tool label="По ширине"><Justify /></Tool>
        <Gap />
        <Split label="Маркированный список"><Bullets /></Split>
        <Split label="Нумерованный список"><Numbering /></Split>
        <Gap />
        <Tool label="Увеличить отступ"><Indent /></Tool>
        <Tool label="Уменьшить отступ"><Outdent /></Tool>
        <Gap />
        <Split label="Межстрочный интервал"><LineSpacing /></Split>
        <Tool label="Увеличить интервал"><ParaMore /></Tool>
        <Tool label="Уменьшить интервал"><ParaLess /></Tool>
      </div>

      <div className="flex min-h-0 flex-1">
        <main className="flex min-w-0 flex-1 flex-col items-center overflow-hidden">
          <div className="flex w-full shrink-0">
            <div className="flex flex-1">
              <span className="mt-[9px] ml-2 h-1.5 w-[7px] border-b-2 border-l-2 border-[#222]" />
            </div>
            <Ruler />
            <div className="flex-1" />
          </div>
          <DocumentPage />
        </main>
        <div className="flex w-[13px] shrink-0 justify-center bg-[#fafafa] pt-[5px]">
          <div className="h-[140px] w-1.5 rounded-full bg-[#a3a3a3]" />
        </div>
        <Sidebar />
      </div>

      <StatusBar />
    </div>
  );
}
